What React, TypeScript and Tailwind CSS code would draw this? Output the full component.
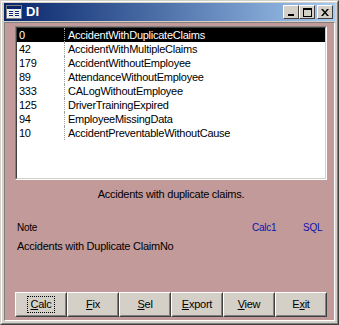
import React from "react";

const rows: [string, string][] = [
  ["0", "AccidentWithDuplicateClaims"],
  ["42", "AccidentWithMultipleClaims"],
  ["179", "AccidentWithoutEmployee"],
  ["89", "AttendanceWithoutEmployee"],
  ["333", "CALogWithoutEmployee"],
  ["125", "DriverTrainingExpired"],
  ["94", "EmployeeMissingData"],
  ["10", "AccidentPreventableWithoutCause"],
];

const font = { fontFamily: '"Liberation Sans", Arial, sans-serif' };

function Btn({ children, focus }: { children: React.ReactNode; focus?: boolean }) {
  return (
    <div className="w-[52px] h-[25px] bg-[#d4d0c8] flex items-center justify-center border border-t-white border-l-white border-r-[#404040] border-b-[#404040]">
      <div className="w-full h-full flex items-center justify-center border border-t-[#d4d0c8] border-l-[#d4d0c8] border-r-[#808080] border-b-[#808080]">
        <span
          className={
            "text-[11px] leading-[13px] tracking-[-0.25px] text-black px-[2px] py-[1px] border border-dotted " +
            (focus ? "border-black" : "border-transparent")
          }
        >
          {children}
        </span>
      </div>
    </div>
  );
}

function TitleBtn({ children, className }: { children: React.ReactNode; className?: string }) {
  return (
    <div
      className={
        "w-[16px] h-[14px] bg-[#d4d0c8] border border-t-white border-l-white border-r-[#404040] border-b-[#404040] flex items-center justify-center " +
        (className ?? "")
      }
    >
      {children}
    </div>
  );
}

export default function App() {
  return (
    <div style={font} className="w-[339px] h-[325px] bg-[#d4d0c8] border border-t-[#d4d0c8] border-l-[#d4d0c8] border-r-[#404040] border-b-[#404040]">
      <div className="w-full h-full border border-t-white border-l-white border-r-[#808080] border-b-[#808080] pt-[1px] px-[2px] pb-[2px] flex flex-col">
        {/* Title bar */}
        <div className="h-[18px] flex items-center bg-gradient-to-r from-[#0a246a] to-[#a6caf0] pl-[2px] pr-[2px]">
          <svg width="16" height="14" viewBox="0 0 16 14" className="shrink-0">
            <rect x="0.5" y="0.5" width="15" height="13" fill="#ffffff" stroke="#808080" />
            <rect x="1" y="1" width="14" height="3" fill="#0a246a" />
            <rect x="3" y="6" width="4" height="1" fill="#0a246a" />
            <rect x="9" y="6" width="4" height="1" fill="#0a246a" />
            <rect x="3" y="8" width="4" height="1" fill="#0a246a" />
            <rect x="9" y="8" width="4" height="1" fill="#0a246a" />
            <rect x="3" y="10" width="4" height="1" fill="#0a246a" />
            <rect x="9" y="10" width="4" height="1" fill="#0a246a" />
            <rect x="2" y="5" width="6" height="7" fill="none" stroke="#c0c0c0" strokeWidth="0.5" />
            <rect x="8" y="5" width="6" height="7" fill="none" stroke="#c0c0c0" strokeWidth="0.5" />
          </svg>
          <span className="ml-[4px] text-white font-bold text-[13px] leading-[16px]">DI</span>
          <div className="ml-auto flex items-center">
            <TitleBtn>
              <div className="w-[6px] h-[2px] bg-black mt-[6px] mr-[1px]" />
            </TitleBtn>
            <TitleBtn>
              <div className="w-[9px] h-[9px] border border-black border-t-2" />
            </TitleBtn>
            <TitleBtn className="ml-[2px]">
              <svg width="8" height="7" viewBox="0 0 8 7">
                <path d="M0 0h2l2 2.5L6 0h2L5 3.5 8 7H6L4 4.5 2 7H0l3-3.5z" fill="#000" />
              </svg>
            </TitleBtn>
          </div>
        </div>
        {/* Client area */}
        <div className="mt-[1px] flex-1 bg-[#c39a9a] border border-t-[#808080] border-l-[#808080] border-r-white border-b-white flex flex-col">
          <div className="ml-[10px] mt-[3px] w-[312px] flex flex-col">
            {/* List box */}
            <div className="h-[154px] border border-t-[#808080] border-l-[#808080] border-r-white border-b-white">
              <div className="w-full h-full bg-white border border-t-[#404040] border-l-[#404040] border-r-[#d4d0c8] border-b-[#d4d0c8]">
                {rows.map(([n, name], i) => (
                  <div
                    key={i}
                    className={
                      "h-[14px] flex items-center text-[11px] leading-[14px] tracking-[-0.25px] " +
                      (i === 0 ? "bg-black text-white" : "text-black")
                    }
                  >
                    <div className="w-[47px] pl-[2px]">{n}</div>
                    <div className="h-[14px] w-0 border-l border-dotted border-[#a0a0a0]" />
                    <div className="pl-[3px]">{name}</div>
                  </div>
                ))}
              </div>
            </div>
            {/* Description */}
            <div className="mt-[7px] h-[14px] text-center text-[11px] leading-[14px] tracking-[-0.25px] text-black">
              Accidents with duplicate claims.
            </div>
            {/* Note row */}
            <div className="mt-[19px] h-[14px] flex items-center pl-[2px]">
              <div className="w-[235px] text-[10px] tracking-[-0.25px] text-black">Note</div>
              <div className="w-[51px] text-[10px] tracking-[-0.25px] text-[#1010b0]">Calc1</div>
              <div className="text-[10px] tracking-[-0.25px] text-[#1010b0]">SQL</div>
            </div>
            <div className="mt-[5px] h-[14px] pl-[2px] text-[11px] leading-[14px] tracking-[-0.25px] text-black">
              Accidents with Duplicate ClaimNo
            </div>
            {/* Buttons */}
            <div className="mt-[39px] flex">
              <Btn focus>
                <u>C</u>alc
              </Btn>
              <Btn>
                <u>F</u>ix
              </Btn>
              <Btn>
                <u>S</u>el
              </Btn>
              <Btn>
                <u>E</u>xport
              </Btn>
              <Btn>
                <u>V</u>iew
              </Btn>
              <Btn>
                E<u>x</u>it
              </Btn>
            </div>
          </div>
        </div>
      </div>
    </div>
  );
}
